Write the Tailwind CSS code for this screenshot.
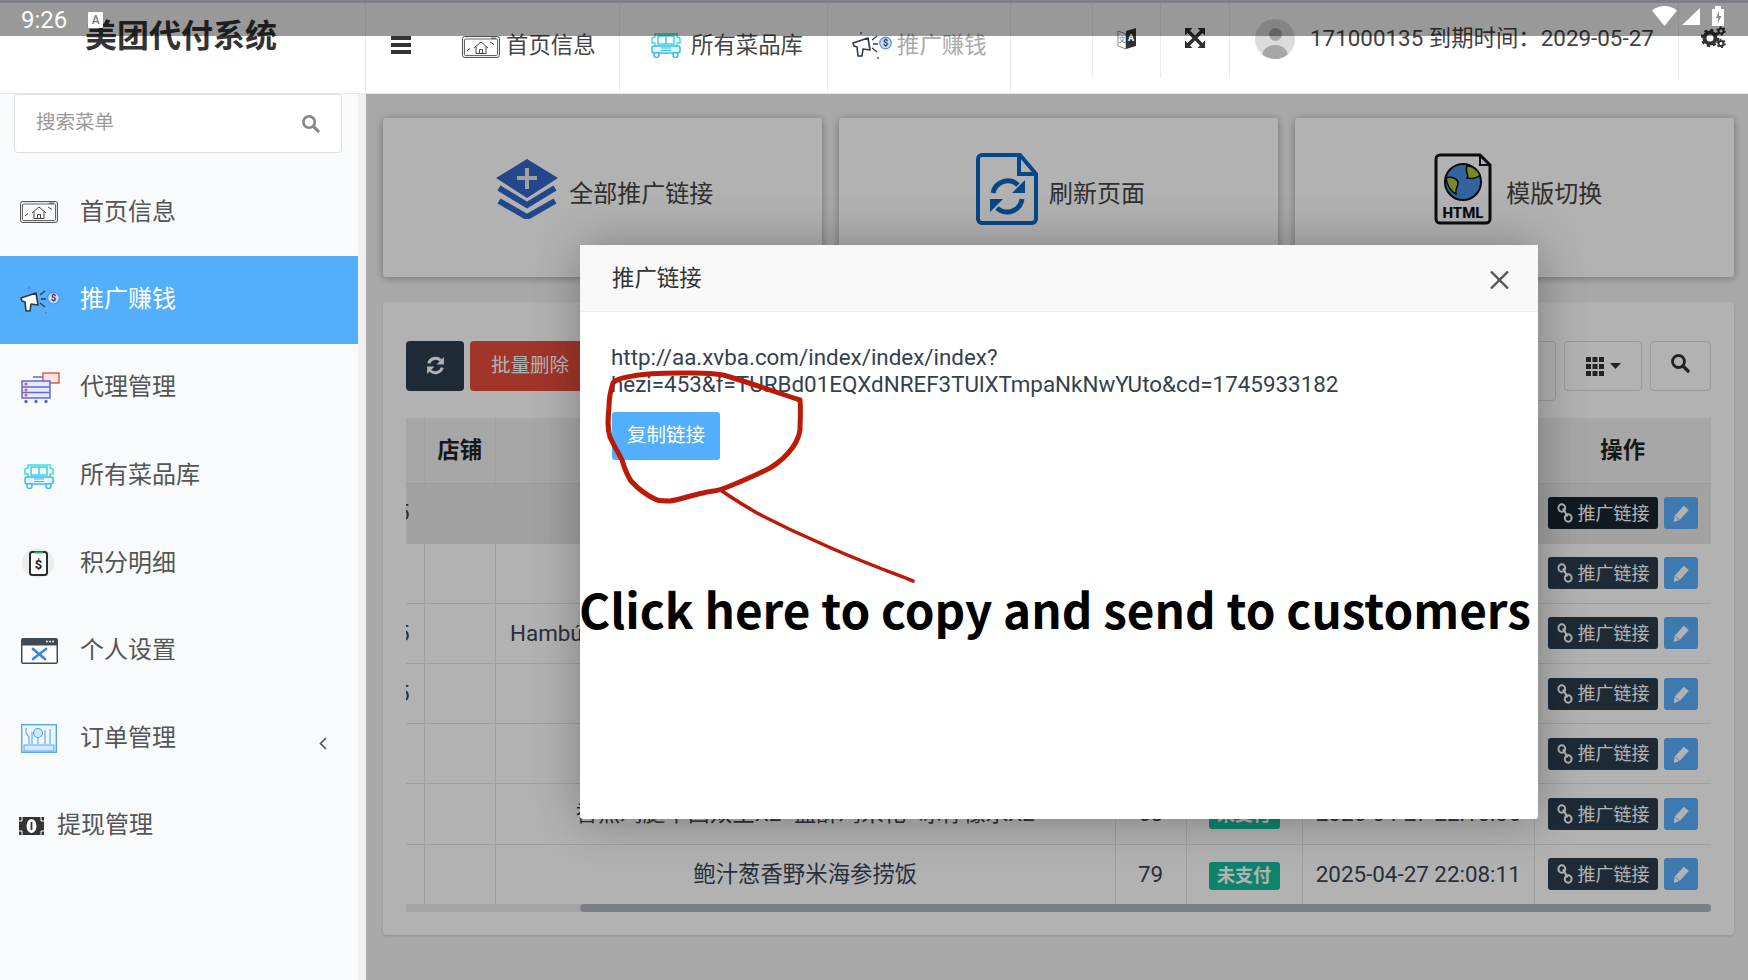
<!DOCTYPE html>
<html lang="en">
<head>
    <meta charset="UTF-8">
    <meta name="viewport" content="width=device-width, initial-scale=1.0">
    <title>美团代付系统</title>
    <script src="https://cdn.jsdelivr.net/npm/@tailwindcss/browser@4"></script>
</head>
<body class="relative h-screen overflow-hidden bg-white text-[#333] font-['Roboto','Noto_Sans_CJK_SC',sans-serif]">

    <!-- shared icons -->
    <svg class="hidden">
        <symbol id="i-home" viewBox="0 0 38 22">
            <rect x="0.6" y="0.6" width="36.8" height="20.8" rx="2" fill="none" stroke="#444" stroke-width="1"/>
            <rect x="2.500" y="3" width="33" height="16.500" rx="1" fill="none" stroke="#555" stroke-width="0.900"/>
            <path d="M12 12l7-6 7 6M14 10.500v7h10v-7M17.500 17.500v-4h3v4M5 15l3-2.500M28 6l4 2.500M29 2.200h5" fill="none" stroke="#444" stroke-width="1"/>
        </symbol>
        <symbol id="i-promo" viewBox="0 0 40 28">
            <path d="M1 12l15-5 2 12-7-1-1 7H6l-1-9-3-1z" fill="#fff" stroke="#2d3a4a" stroke-width="1.600" stroke-linejoin="round"/>
            <path d="M20 9l5-4M21 13h5M20 17l5 4" stroke="#2d3a4a" stroke-width="1.300" fill="none"/>
            <circle cx="33.500" cy="12" r="5.800" fill="#c5dcf7" stroke="#5b8fe0" stroke-width="1.200"/>
            <text x="33.500" y="15.200" font-size="9" font-weight="700" text-anchor="middle" fill="#26364a">$</text>
            <circle cx="9" cy="2" r="1.200" fill="#5b86e0"/>
            <circle cx="26" cy="27" r="1.200" fill="#5b86e0"/>
        </symbol>
        <symbol id="i-bus" viewBox="0 0 32 26">
            <path d="M5 2h22v3l3 1v5h-3v7H5v-7H2V6l3-1z" fill="none" stroke="#3fe0d8" stroke-width="1.500"/>
            <path d="M8 4h16v8H8zM16 4v8" fill="none" stroke="#35d2e0" stroke-width="1.500"/>
            <rect x="2" y="14" width="28" height="7" rx="2" fill="#dff7fb" stroke="#3fb8ee" stroke-width="1.500"/>
            <path d="M11 16h10M11 18.500h10" stroke="#3fb8ee" stroke-width="1.200"/>
            <circle cx="6.500" cy="23" r="2.500" fill="#fff" stroke="#3fb8ee" stroke-width="1.500"/>
            <circle cx="25.500" cy="23" r="2.500" fill="#fff" stroke="#3fb8ee" stroke-width="1.500"/>
        </symbol>
        <symbol id="i-search" viewBox="0 0 20 20">
            <circle cx="8.500" cy="8.500" r="6" fill="none" stroke="currentColor" stroke-width="2.800"/>
            <path d="M13 13l5 5" stroke="currentColor" stroke-width="3.400" stroke-linecap="round"/>
        </symbol>
        <symbol id="i-link" viewBox="0 0 16 20">
            <path d="M6 5.500l4.500 8" stroke="currentColor" stroke-width="2"/>
            <ellipse cx="4.800" cy="5" rx="3.400" ry="3.800" fill="none" stroke="currentColor" stroke-width="2"/>
            <ellipse cx="11.200" cy="15" rx="3.400" ry="3.800" fill="none" stroke="currentColor" stroke-width="2"/>
        </symbol>
        <symbol id="i-pencil" viewBox="0 0 16 18">
            <path d="M1.500 17l.8-5.500L10.500 2.500l4.500 3.800-8.200 9z" fill="currentColor"/>
            <path d="M3 12l4 3.500" stroke="#5aaffb" stroke-width="0.800"/>
        </symbol>
        <symbol id="i-refresh" viewBox="0 0 20 20">
            <path d="M3.500 8A7 7 0 0 1 15 5M16.500 12A7 7 0 0 1 5 15" fill="none" stroke="currentColor" stroke-width="2.800"/>
            <path d="M18 2v7h-7zM2 18v-7h7z" fill="currentColor"/>
        </symbol>
    </svg>

    <!-- top bar -->
    <header class="flex h-[94px] border-b border-[#e6e6e6] bg-white">
        <div class="w-[366px] shrink-0 border-r border-[#eee] pl-[85px] pt-[14px]">
            <h1 class="text-[32px] leading-[44px] font-bold text-[#333]">美团代付系统</h1>
        </div>
        <div class="flex w-[254px] shrink-0 items-center border-r border-[#eee] pb-[3px] pl-[25px]">
            <div class="flex w-5 flex-col gap-[3px]">
                <span class="h-1 bg-[#333]"></span><span class="h-1 bg-[#333]"></span><span class="h-1 bg-[#333]"></span>
            </div>
            <svg class="ml-[51px] mt-1 h-[22px] w-[38px]"><use href="#i-home"/></svg>
            <span class="ml-[6px] mt-[2px] text-[22.400px] text-[#444]">首页信息</span>
        </div>
        <div class="flex w-[208px] shrink-0 items-center border-r border-[#eee] pb-[3px] pl-[30px]">
            <svg class="h-[26px] w-[32px]"><use href="#i-bus"/></svg>
            <span class="ml-[9px] mt-[2px] text-[22.400px] text-[#444]">所有菜品库</span>
        </div>
        <div class="flex w-[183px] shrink-0 items-center border-r border-[#eee] pb-[3px] pl-6">
            <svg class="h-[28px] w-[40px]"><use href="#i-promo"/></svg>
            <span class="ml-[5px] mt-[2px] text-[22.400px] text-[#aaa]">推广赚钱</span>
        </div>
        <div class="w-[81px] shrink-0"></div>
        <div class="flex h-[78px] w-[69px] shrink-0 items-center justify-center border-x border-[#eee]">
            <svg class="h-[22px] w-[20px]" viewBox="0 0 20 22">
                <path d="M1 3l8 3v15l-8-3z" fill="#fff" stroke="#888"/>
                <path d="M9 3l10-3v18l-10 3z" fill="#333"/>
                <text x="14" y="13" font-size="9" font-weight="700" text-anchor="middle" fill="#fff">A</text>
                <text x="5" y="14" font-size="7" text-anchor="middle" fill="#777">文</text>
            </svg>
        </div>
        <div class="flex h-[78px] w-[69px] shrink-0 items-center justify-center border-r border-[#eee]">
            <svg class="mb-[2px] h-5 w-5" viewBox="0 0 20 20" fill="#2f2f2f">
                <path d="M0 0h7.500L5 2.500 10 7.500 15 2.500 12.500 0H20v7.500L17.500 5l-5 5 5 5 2.500-2.500V20h-7.500l2.500-2.500-5-5-5 5L7.500 20H0v-7.500L2.500 15l5-5-5-5L0 7.500z"/>
            </svg>
        </div>
        <div class="flex h-[78px] w-[449px] shrink-0 items-center border-r border-[#eee] pl-[25px]">
            <div class="relative h-10 w-10 overflow-hidden rounded-full bg-[#dcdcdc]">
                <span class="absolute left-[14px] top-[9px] h-[13px] w-[13px] rounded-full bg-[#a6a6a6]"></span>
                <span class="absolute left-[7px] top-[26px] h-[24px] w-[26px] rounded-full bg-[#a6a6a6]"></span>
            </div>
            <span class="ml-[15px] whitespace-nowrap text-[22.400px] text-[#444]">171000135 到期时间：2029-05-27</span>
        </div>
        <div class="flex h-[78px] flex-1 items-center justify-center">
            <svg class="mb-[4px] h-[22px] w-[25px]" viewBox="0 0 25 22">
                <circle cx="9" cy="12" r="5.500" fill="none" stroke="#333" stroke-width="4"/>
                <circle cx="9" cy="12" r="8" fill="none" stroke="#333" stroke-width="2.500" stroke-dasharray="3 3.300"/>
                <circle cx="20" cy="5" r="2.500" fill="none" stroke="#333" stroke-width="2"/>
                <circle cx="20" cy="5" r="4" fill="none" stroke="#333" stroke-width="1.500" stroke-dasharray="2 2.200"/>
                <circle cx="20" cy="17.500" r="2.500" fill="none" stroke="#333" stroke-width="2"/>
                <circle cx="20" cy="17.500" r="4" fill="none" stroke="#333" stroke-width="1.500" stroke-dasharray="2 2.200"/>
            </svg>
        </div>
    </header>

    <div class="flex h-[886px]">
        <!-- side menu -->
        <aside class="flex w-[358px] shrink-0 flex-col bg-[#f8fafc] text-[24px] text-[#555]">
            <div class="mx-[14px] flex h-[59px] w-[328px] items-center justify-between rounded-[4px] border border-[#dcdfe6] bg-white pl-[21px] pr-[21px]">
                <span class="mb-[2px] text-[19.500px] text-[#999]">搜索菜单</span>
                <svg class="h-[19px] w-[19px] text-[#888]"><use href="#i-search"/></svg>
            </div>
            <nav class="mt-[15px] flex flex-col">
                <a class="flex h-[88px] items-center pl-5">
                    <svg class="h-[22px] w-[38px]"><use href="#i-home"/></svg>
                    <span class="ml-[22px]">首页信息</span>
                </a>
                <a class="flex h-[88px] items-center bg-[#53aefb] pl-5 text-white">
                    <svg class="h-[28px] w-[40px]"><use href="#i-promo"/></svg>
                    <span class="mb-[2px] ml-5">推广赚钱</span>
                </a>
                <a class="flex h-[87.700px] items-center pl-5">
                    <svg class="h-[32px] w-[40px]" viewBox="0 0 40 32">
                        <rect x="23" y="1" width="16" height="10" fill="#fbe4e0" stroke="#d9604f" stroke-width="1.500"/>
                        <rect x="2" y="9" width="28" height="17" fill="#e6e9fb" stroke="#5d69d8" stroke-width="1.500"/>
                        <path d="M2 15h28M2 20.500h28M13 5h10" stroke="#5d69d8" stroke-width="1.300"/>
                        <circle cx="6" cy="12" r="1.500" fill="#d9604f"/><circle cx="6" cy="18" r="1.500" fill="#d9604f"/><circle cx="6" cy="23" r="1.500" fill="#d9604f"/>
                        <circle cx="6" cy="29.500" r="1.700" fill="#5d69d8"/><circle cx="16" cy="29.500" r="1.700" fill="#5d69d8"/><circle cx="26" cy="29.500" r="1.700" fill="#5d69d8"/>
                    </svg>
                    <span class="mb-[2px] ml-5">代理管理</span>
                </a>
                <a class="flex h-[87.700px] items-center pl-[22px]">
                    <svg class="h-[26px] w-[34px]"><use href="#i-bus"/></svg>
                    <span class="mb-[2px] ml-[24px]">所有菜品库</span>
                </a>
                <a class="flex h-[87.700px] items-center pl-[21px]">
                    <svg class="h-[32px] w-[36px]" viewBox="0 0 36 32">
                        <ellipse cx="17" cy="16" rx="16" ry="15" fill="#ececec"/>
                        <rect x="9" y="5" width="17" height="23" rx="2.500" fill="#fff" stroke="#2b2b2b" stroke-width="2"/>
                        <path d="M13 5.500h9" stroke="#3aa655" stroke-width="2"/>
                        <text x="17.500" y="22" font-size="13" font-weight="700" text-anchor="middle" fill="#222">$</text>
                    </svg>
                    <span class="mb-[1px] ml-[23px]">积分明细</span>
                </a>
                <a class="flex h-[87.700px] items-center pl-[21px]">
                    <svg class="h-[26px] w-[37px]" viewBox="0 0 37 26">
                        <rect width="37" height="26" rx="2" fill="#3f4a57"/>
                        <rect x="1.500" y="7.500" width="34" height="17" fill="#fff"/>
                        <path d="M12 11l12 10M25 11L12 21" stroke="#3f87d6" stroke-width="2.800" stroke-linecap="round"/>
                        <circle cx="26" cy="3.500" r="0.900" fill="#fff"/><circle cx="29" cy="3.500" r="0.900" fill="#fff"/><circle cx="32" cy="3.500" r="0.900" fill="#fff"/>
                    </svg>
                    <span class="mb-[2px] ml-[22px]">个人设置</span>
                </a>
                <a class="flex h-[87.700px] items-center pl-[21px]">
                    <svg class="h-[29px] w-[36px]" viewBox="0 0 36 29">
                        <rect x="0.700" y="0.700" width="34.600" height="27.600" fill="#eef6fe" stroke="#56a7ee" stroke-width="1.400"/>
                        <circle cx="17" cy="9" r="4.500" fill="#cfe6fb" stroke="#56a7ee" stroke-width="1.200"/>
                        <path d="M5 4v5l3 4v7M29 5v15M17 14v6M11 8v12M24 6v14" stroke="#56a7ee" stroke-width="1.100" fill="none"/>
                        <rect x="3" y="21" width="30" height="6" fill="#d3e9fc" stroke="#56a7ee"/>
                    </svg>
                    <span class="mb-[2px] ml-[23px]">订单管理</span>
                    <svg class="ml-[143px] mt-[10px] h-[13px] w-[8px]" viewBox="0 0 8 13"><path d="M7 1L1.500 6.500 7 12" fill="none" stroke="#555" stroke-width="1.700"/></svg>
                </a>
                <a class="flex h-[87.700px] items-center pl-[19px]">
                    <svg class="h-[18px] w-[25px]" viewBox="0 0 25 18">
                        <rect width="25" height="18" fill="#333"/>
                        <ellipse cx="12.500" cy="9" rx="5" ry="7" fill="#fff"/>
                        <path d="M0 4h3V0M25 4h-3V0M0 14h3v4M25 14h-3v4" fill="none" stroke="#fff"/>
                        <path d="M12.500 5v8" stroke="#333" stroke-width="1.800"/>
                    </svg>
                    <span class="mb-[2px] ml-[13px]">提现管理</span>
                </a>
            </nav>
        </aside>
        <div class="w-2 shrink-0 bg-[#f0f0f0]"></div>

        <!-- page content -->
        <main class="relative flex-1 bg-[#f3f3f3] pl-[17px] pr-[14px] pt-[24px]">
            <div class="grid h-[159px] grid-cols-3 gap-[16.500px] text-[24px] text-[#444]">
                <div class="flex items-center justify-center gap-[11px] rounded-[3px] bg-white pb-[18px] pl-[4px] shadow-[0_1px_8px_rgba(0,0,0,0.35)]">
                    <svg class="h-[60px] w-[62px]" viewBox="0 0 62 60">
                        <path d="M31 0l31 19-31 20L0 19z" fill="#3168c8"/>
                        <path d="M31 9v21M21 19h20" stroke="#e6e6e6" stroke-width="4"/>
                        <path d="M3 29l28 17 28-17M3 42l28 16 28-16" fill="none" stroke="#3168c8" stroke-width="6"/>
                    </svg>
                    <span class="mt-[11px]">全部推广链接</span>
                </div>
                <div class="flex items-center justify-center gap-[11px] rounded-[3px] bg-white pb-[18px] pl-[4px] shadow-[0_1px_8px_rgba(0,0,0,0.35)]">
                    <svg class="h-[72px] w-[62px]" viewBox="0 0 62 72">
                        <path d="M6 2h38l16 19v45a4 4 0 0 1-4 4H6a4 4 0 0 1-4-4V6a4 4 0 0 1 4-4z" fill="none" stroke="#0a66c2" stroke-width="4"/>
                        <path d="M43 3v18h17" fill="none" stroke="#0a66c2" stroke-width="4"/>
                        <path d="M17 40a15 15 0 0 1 25-8M46 46a15 15 0 0 1-25 9" fill="none" stroke="#0a66c2" stroke-width="5"/>
                        <path d="M49 27v13H36zM14 59V46h13z" fill="#0a66c2"/>
                    </svg>
                    <span class="mt-[11px]">刷新页面</span>
                </div>
                <div class="flex items-center justify-center gap-[14px] rounded-[3px] bg-white pb-[18px] pl-[8px] shadow-[0_1px_8px_rgba(0,0,0,0.35)]">
                    <svg class="h-[72px] w-[58px]" viewBox="0 0 58 72">
                        <path d="M6 2h40l10 10v54a4 4 0 0 1-4 4H6a4 4 0 0 1-4-4V6a4 4 0 0 1 4-4z" fill="#fff" stroke="#111" stroke-width="3"/>
                        <path d="M46 3v9h9" fill="none" stroke="#111" stroke-width="2"/>
                        <circle cx="29" cy="29" r="18" fill="#4a90e2" stroke="#111" stroke-width="2"/>
                        <path d="M12 25c6-2 12 1 12 5s-3 5-2 11c-5-2-9-9-10-16zM33 13c5 0 10 3 13 9-3 3-8 4-13 3 3-3-3-6 0-12z" fill="#a6c83a" stroke="#111" stroke-width="1.500"/>
                        <text x="29" y="65" font-size="15" font-weight="800" text-anchor="middle" fill="#111" font-family="Roboto">HTML</text>
                    </svg>
                    <span class="mt-[11px]">模版切换</span>
                </div>
            </div>

            <section class="mt-[25px] h-[633px] rounded-[4px] bg-white px-[23px] pt-[39px] shadow-[0_1px_3px_rgba(0,0,0,0.15)]">
                <div class="flex h-[49px] items-start">
                    <button class="flex h-[50px] w-[58px] items-center justify-center rounded-[4px] bg-[#2c3e50] text-white">
                        <svg class="mb-[2px] h-[21px] w-[21px]"><use href="#i-refresh"/></svg>
                    </button>
                    <button class="ml-[6px] h-[50px] w-[120px] rounded-[4px] bg-[#e74c3c] text-[19.500px] text-white">批量删除</button>
                    <div class="ml-auto h-[60px] w-[100px] rounded-[4px] border border-[#ddd]"></div>
                    <button class="ml-2 flex h-[50px] w-[78px] items-center justify-center gap-[6px] rounded-[4px] border border-[#ddd] text-[#333]">
                        <svg class="h-[19px] w-[18px]" viewBox="0 0 18 19" fill="#333">
                            <path d="M0 0h5v5H0zM6.500 0h5v5h-5zM13 0h5v5h-5zM0 7h5v5H0zM6.500 7h5v5h-5zM13 7h5v5h-5zM0 14h5v5H0zM6.500 14h5v5h-5zM13 14h5v5h-5z"/>
                        </svg>
                        <svg class="h-[6px] w-[11px]" viewBox="0 0 11 6" fill="#333"><path d="M0 0h11L5.500 6z"/></svg>
                    </button>
                    <button class="ml-2 flex h-[50px] w-[61px] items-center justify-center rounded-[4px] border border-[#ddd] text-[#333]">
                        <svg class="mb-[6px] mr-[2px] h-5 w-5"><use href="#i-search"/></svg>
                    </button>
                </div>

                <div class="mt-[28px] w-[1305px] overflow-hidden">
                    <table class="w-full table-fixed border-collapse text-center text-[22.400px] text-[#3a4555]">
                        <colgroup>
                            <col class="w-[18px]"><col class="w-[71.500px]"><col class="w-[619.500px]"><col class="w-[71px]"><col class="w-[116px]"><col class="w-[232.500px]"><col class="w-[176.500px]">
                        </colgroup>
                        <thead class="bg-[#f0f0f0] text-[#222]">
                            <tr class="h-[65px] border-b border-[#ddd]">
                                <th class="border-r border-[#e6e6e6]"></th>
                                <th class="border-r border-[#e6e6e6] pt-[2px] font-bold">店铺</th>
                                <th colspan="4"></th>
                                <th class="pt-[2px] font-bold">操作</th>
                            </tr>
                        </thead>
                        <tbody>
                            <tr class="h-[60.200px] border-b border-[#e6e6e6] bg-[#e8e8e8]">
                                <td class="overflow-hidden border-r border-[#e6e6e6] text-left"><span class="-ml-[9px]">5</span></td>
                                <td class="border-r border-[#e6e6e6]"></td><td class="border-r border-[#e6e6e6]"></td><td class="border-r border-[#e6e6e6]"></td><td class="border-r border-[#e6e6e6]"></td><td class="border-r border-[#e6e6e6]"></td>
                                <td><div class="flex gap-[6px] pl-[13px]">
                                    <a class="flex h-8 w-[110px] items-center justify-center gap-[5px] rounded-[3px] bg-[#192530] text-[18px] text-white"><svg class="h-[20px] w-[16px]"><use href="#i-link"/></svg>推广链接</a>
                                    <a class="flex h-8 w-[34px] items-center justify-center rounded-[3px] bg-[#5aaffb] text-white"><svg class="h-5 w-[18px]"><use href="#i-pencil"/></svg></a>
                                </div></td>
                            </tr>
                            <tr class="h-[60.200px] border-b border-[#e6e6e6]">
                                <td class="border-r border-[#e6e6e6]"></td><td class="border-r border-[#e6e6e6]"></td><td class="border-r border-[#e6e6e6]"></td><td class="border-r border-[#e6e6e6]"></td><td class="border-r border-[#e6e6e6]"></td><td class="border-r border-[#e6e6e6]"></td>
                                <td><div class="flex gap-[6px] pl-[13px]">
                                    <a class="flex h-8 w-[110px] items-center justify-center gap-[5px] rounded-[3px] bg-[#2c3e50] text-[18px] text-white"><svg class="h-[20px] w-[16px]"><use href="#i-link"/></svg>推广链接</a>
                                    <a class="flex h-8 w-[34px] items-center justify-center rounded-[3px] bg-[#5aaffb] text-white"><svg class="h-5 w-[18px]"><use href="#i-pencil"/></svg></a>
                                </div></td>
                            </tr>
                            <tr class="h-[60.200px] border-b border-[#e6e6e6]">
                                <td class="overflow-hidden border-r border-[#e6e6e6] text-left"><span class="-ml-[9px]">5</span></td>
                                <td class="border-r border-[#e6e6e6]"></td>
                                <td class="border-r border-[#e6e6e6] pl-[14px] text-left">Hambúrguer</td>
                                <td class="border-r border-[#e6e6e6]"></td><td class="border-r border-[#e6e6e6]"></td><td class="border-r border-[#e6e6e6]"></td>
                                <td><div class="flex gap-[6px] pl-[13px]">
                                    <a class="flex h-8 w-[110px] items-center justify-center gap-[5px] rounded-[3px] bg-[#2c3e50] text-[18px] text-white"><svg class="h-[20px] w-[16px]"><use href="#i-link"/></svg>推广链接</a>
                                    <a class="flex h-8 w-[34px] items-center justify-center rounded-[3px] bg-[#5aaffb] text-white"><svg class="h-5 w-[18px]"><use href="#i-pencil"/></svg></a>
                                </div></td>
                            </tr>
                            <tr class="h-[60.200px] border-b border-[#e6e6e6]">
                                <td class="overflow-hidden border-r border-[#e6e6e6] text-left"><span class="-ml-[9px]">5</span></td>
                                <td class="border-r border-[#e6e6e6]"></td><td class="border-r border-[#e6e6e6]"></td><td class="border-r border-[#e6e6e6]"></td><td class="border-r border-[#e6e6e6]"></td><td class="border-r border-[#e6e6e6]"></td>
                                <td><div class="flex gap-[6px] pl-[13px]">
                                    <a class="flex h-8 w-[110px] items-center justify-center gap-[5px] rounded-[3px] bg-[#2c3e50] text-[18px] text-white"><svg class="h-[20px] w-[16px]"><use href="#i-link"/></svg>推广链接</a>
                                    <a class="flex h-8 w-[34px] items-center justify-center rounded-[3px] bg-[#5aaffb] text-white"><svg class="h-5 w-[18px]"><use href="#i-pencil"/></svg></a>
                                </div></td>
                            </tr>
                            <tr class="h-[60.200px] border-b border-[#e6e6e6]">
                                <td class="border-r border-[#e6e6e6]"></td><td class="border-r border-[#e6e6e6]"></td><td class="border-r border-[#e6e6e6]"></td><td class="border-r border-[#e6e6e6]"></td><td class="border-r border-[#e6e6e6]"></td><td class="border-r border-[#e6e6e6]"></td>
                                <td><div class="flex gap-[6px] pl-[13px]">
                                    <a class="flex h-8 w-[110px] items-center justify-center gap-[5px] rounded-[3px] bg-[#2c3e50] text-[18px] text-white"><svg class="h-[20px] w-[16px]"><use href="#i-link"/></svg>推广链接</a>
                                    <a class="flex h-8 w-[34px] items-center justify-center rounded-[3px] bg-[#5aaffb] text-white"><svg class="h-5 w-[18px]"><use href="#i-pencil"/></svg></a>
                                </div></td>
                            </tr>
                            <tr class="h-[60.200px] border-b border-[#e6e6e6]">
                                <td class="border-r border-[#e6e6e6]"></td><td class="border-r border-[#e6e6e6]"></td>
                                <td class="whitespace-nowrap border-r border-[#e6e6e6]">香煎鸡腿中西双主X2+盐酥鸡米花+冰柠檬水X2</td>
                                <td class="border-r border-[#e6e6e6]">68</td>
                                <td class="border-r border-[#e6e6e6]"><span class="inline-block h-7 w-[71px] rounded-[3px] bg-[#18bc9c] text-[18px] leading-7 font-bold text-white">未支付</span></td>
                                <td class="whitespace-nowrap border-r border-[#e6e6e6]">2025-04-27 22:10:36</td>
                                <td><div class="flex gap-[6px] pl-[13px]">
                                    <a class="flex h-8 w-[110px] items-center justify-center gap-[5px] rounded-[3px] bg-[#2c3e50] text-[18px] text-white"><svg class="h-[20px] w-[16px]"><use href="#i-link"/></svg>推广链接</a>
                                    <a class="flex h-8 w-[34px] items-center justify-center rounded-[3px] bg-[#5aaffb] text-white"><svg class="h-5 w-[18px]"><use href="#i-pencil"/></svg></a>
                                </div></td>
                            </tr>
                            <tr class="h-[60.200px]">
                                <td class="border-r border-[#e6e6e6]"></td><td class="border-r border-[#e6e6e6]"></td>
                                <td class="whitespace-nowrap border-r border-[#e6e6e6]">鲍汁葱香野米海参捞饭</td>
                                <td class="border-r border-[#e6e6e6]">79</td>
                                <td class="border-r border-[#e6e6e6]"><span class="inline-block h-7 w-[71px] rounded-[3px] bg-[#18bc9c] text-[18px] leading-7 font-bold text-white">未支付</span></td>
                                <td class="whitespace-nowrap border-r border-[#e6e6e6]">2025-04-27 22:08:11</td>
                                <td><div class="flex gap-[6px] pl-[13px]">
                                    <a class="flex h-8 w-[110px] items-center justify-center gap-[5px] rounded-[3px] bg-[#2c3e50] text-[18px] text-white"><svg class="h-[20px] w-[16px]"><use href="#i-link"/></svg>推广链接</a>
                                    <a class="flex h-8 w-[34px] items-center justify-center rounded-[3px] bg-[#5aaffb] text-white"><svg class="h-5 w-[18px]"><use href="#i-pencil"/></svg></a>
                                </div></td>
                            </tr>
                        </tbody>
                    </table>
                    <!-- horizontal scrollbar -->
                    <div class="h-2 bg-[#ebebeb] pl-[174px]"><div class="h-2 rounded-full bg-[#b3b7c1]"></div></div>
                </div>
            </section>

            <!-- dim layer and dialog -->
            <div class="absolute inset-0 bg-black/30"></div>
            <div class="absolute left-[214px] top-[151px] h-[574px] w-[958px] rounded-[3px] bg-white shadow-[1px_1px_50px_rgba(0,0,0,0.3)]">
                <div class="flex h-[67px] items-center justify-between border-b border-[#eee] bg-[#f8f8f8] pl-[32px] pr-[29px]">
                    <span class="mt-[1px] text-[22.400px] text-[#333]">推广链接</span>
                    <svg class="mt-[3px] h-[18px] w-[19px]" viewBox="0 0 19 18"><path d="M1 .5l17 17M18 .5l-17 17" stroke="#555" stroke-width="2.400"/></svg>
                </div>
                <div class="px-[31px] pt-[32px] text-[22.400px] leading-[26.500px] text-[#343f50]">
                    <p class="w-[800px] break-all">http://aa.xvba.com/index/index/index?<br>hezi=453&amp;f=TURBd01EQXdNREF3TUlXTmpaNkNwYUto&amp;cd=1745933182</p>
                    <button class="ml-[1px] mt-[15px] h-12 w-[108px] rounded-[3px] bg-[#53aefb] text-[19.500px] text-white">复制链接</button>
                </div>
                <!-- hand drawn annotation -->
                <svg class="absolute inset-0 h-full w-full" viewBox="580 245 958 574" fill="none" stroke="#bb1a08" stroke-linecap="round" stroke-linejoin="round">
                    <path stroke-width="5" d="M800 400C775 392 748 382 723 375C708 372 695 373 680 373C662 373 647 373 633 376C622 378 616 379 613 383C610 392 609 398 609 407C608 418 607 428 610 437C614 446 618 452 622 460C625 470 627 475 631 481C640 491 648 496 657 500C661 501 665 501 670 501C682 499 692 495 703 493C711 491 718 491 725 488C740 482 756 475 770 468C780 462 788 454 793 447C797 441 799 436 800 430C800 420 801 410 800 400Z"/>
                    <path stroke-width="3.500" d="M722 491C732 498 745 506 757 513C778 524 799 534 820 543C852 558 885 570 913 581"/>
                </svg>
                <p class="absolute -left-[1px] top-[331px] whitespace-nowrap font-['Noto_Sans_CJK_SC',sans-serif] text-[47.650px] leading-[66px] font-bold text-black">Click here to copy and send to customers</p>
            </div>
        </main>
    </div>

    <!-- android status bar, lies over the page -->
    <div class="absolute inset-x-0 top-0 flex h-9 items-center border-t-[3px] border-[#7f8085] bg-black/40 pl-[21px] pr-[23px] text-white">
        <span class="text-[24px] leading-none">9:26</span>
        <span class="ml-[21px] flex h-4 w-[15px] items-center justify-center rounded-[1px] bg-white text-[12px] font-medium text-[#777]">A</span>
        <svg class="ml-auto mb-[8px] h-5 w-[73px]" viewBox="0 0 73 20" fill="#fff">
            <path d="M0 4.500C7-1.500 18-1.500 25 4.500L12.500 20z"/>
            <path d="M48 2v17H30z"/>
            <path d="M60 3h3V0h6v3h3v17H60z"/>
            <path d="M67 5l-3 7h2.500l-1 6 4-8h-2.500z" fill="#888"/>
        </svg>
    </div>

</body>
</html>
